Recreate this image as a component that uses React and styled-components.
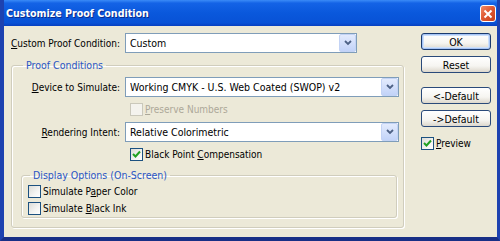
import React from "react";
import styled, { createGlobalStyle, css } from "styled-components";

const Global = createGlobalStyle`
  html, body { margin: 0; padding: 0; background: #ece9d8; }
  body { font-family: "DejaVu Sans Condensed", "DejaVu Sans", sans-serif; font-stretch: condensed; font-size: 10px; color: #000; }
  * { box-sizing: border-box; }
`;

const Window = styled.div`
  width: 500px;
  height: 241px;
  display: flex;
  flex-direction: column;
  background: #ece9d8;
  border-left: 4px solid #1d42b0;
  border-right: 3px solid #1d42b0;
  border-bottom: 4px solid #182f86;
  overflow: hidden;
`;

const TitleBar = styled.div`
  height: 26px;
  margin: 0 -3px 0 -4px;
  display: flex;
  align-items: center;
  justify-content: space-between;
  padding: 0 4px 0 6px;
  background: linear-gradient(#3b8bf7 0%, #1463e6 12%, #0a58dc 50%, #0852d6 88%, #0740c0 100%);
`;

const Title = styled.div`
  font-family: "DejaVu Sans Condensed", "DejaVu Sans", sans-serif;
  font-stretch: condensed;
  font-weight: bold;
  font-size: 10.6px;
  color: #fff;
  text-shadow: 1px 1px 0 #0a2a8a;
`;

const CloseButton = styled.div`
  width: 16px;
  height: 17px;
  margin-top: 1px;
  border: 1px solid #fff;
  border-radius: 3px;
  background: linear-gradient(135deg, #f08a68 0%, #e05a34 45%, #c8401c 100%);
  display: flex;
  align-items: center;
  justify-content: center;
`;

const Body = styled.div`
  flex: 1;
  display: flex;
  padding: 7px 0 0 7px;
  gap: 17px;
`;

const LeftColumn = styled.div`
  width: 393px;
  display: flex;
  flex-direction: column;
`;

const RightColumn = styled.div`
  width: 70px;
  display: flex;
  flex-direction: column;
`;

const TopRow = styled.div`
  display: grid;
  grid-template-columns: 114px 232px;
  height: 20px;
  align-items: center;
`;

const Label = styled.span`
  white-space: nowrap;
  text-align: ${(p) => (p.$right ? "right" : "left")};
  color: ${(p) => (p.$disabled ? "#aca899" : "#000")};
`;

const U = styled.span`
  text-decoration: underline;
  text-underline-offset: 1px;
`;

const SelectBox = styled.div`
  height: 20px;
  border: 1px solid #7f9db9;
  background: #fff;
  display: flex;
  align-items: center;
  padding-left: 4px;
  font-size: 10.5px;
`;

const SelectText = styled.span`
  flex: 1;
  white-space: nowrap;
  overflow: hidden;
`;

const ArrowButton = styled.div`
  width: 17px;
  height: 18px;
  border: 1px solid #c3d3f5;
  border-radius: 2px;
  background: linear-gradient(#e3ebfd, #c2d3f8);
  display: flex;
  align-items: center;
  justify-content: center;
`;

const Group = styled.fieldset`
  margin: ${(p) => p.$margin};
  padding: ${(p) => p.$padding};
  border: 1px solid #d0cdbd;
  border-radius: 3px;
  box-shadow: inset 1px 1px 0 #fff, 1px 1px 0 #fff;
  min-width: 0;
`;

const Legend = styled.legend`
  height: 13px;
  line-height: 13px;
  padding: 0 3px;
  margin-left: ${(p) => p.$offset}px;
  color: #2a55c4;
  font-size: 10.5px;
`;

const FormGrid = styled.div`
  display: grid;
  grid-template-columns: 102px 274px;
  grid-template-rows: 20px 25px 20px 24px;
  column-gap: 5px;
  align-items: center;
`;

const CheckRow = styled.div`
  display: flex;
  align-items: center;
  gap: 2px;
  height: ${(p) => p.$h || 17}px;
  grid-column: ${(p) => p.$col || "auto"};
  padding-left: ${(p) => p.$indent || 0}px;
`;

const Box = styled.span`
  width: 13px;
  height: 13px;
  flex: none;
  border: 1px solid ${(p) => (p.$disabled ? "#cac8bb" : "#1c5180")};
  background: ${(p) =>
    p.$disabled ? "#f4f3ee" : "linear-gradient(135deg, #dcdcd7 0%, #f4f4f2 60%, #fff 100%)"};
  display: flex;
  align-items: center;
  justify-content: center;
`;

const Button = styled.div`
  height: 17px;
  margin-top: ${(p) => p.$mt || 0}px;
  border: 1px solid #2a4a7a;
  border-radius: 3px;
  background: linear-gradient(#ffffff 0%, #f6f5f1 60%, #dcd7cc 100%);
  display: flex;
  align-items: center;
  justify-content: center;
  font-size: 10.5px;
  ${(p) =>
    p.$default &&
    css`
      box-shadow: inset 0 0 0 1px #a6c4f5, inset 0 0 0 2px #cde0fb;
      border-color: #1a3a6e;
    `}
`;

const PreviewRow = styled.div`
  display: flex;
  align-items: center;
  gap: 2px;
  margin-top: 10px;
  height: 13px;
`;

const Check = ({ checked, disabled }) => (
  <Box $disabled={disabled}>
    {checked && (
      <svg width="9" height="9" viewBox="0 0 9 9">
        <path d="M1 4 L3.5 6.5 L8 1.5" fill="none" stroke="#21a121" strokeWidth="2" />
      </svg>
    )}
  </Box>
);

const Select = ({ children }) => (
  <SelectBox>
    <SelectText>{children}</SelectText>
    <ArrowButton>
      <svg width="8" height="6" viewBox="0 0 8 6">
        <path d="M1 1 L4 4 L7 1" fill="none" stroke="#4d6185" strokeWidth="1.8" />
      </svg>
    </ArrowButton>
  </SelectBox>
);

export default function App() {
  return (
    <>
      <Global />
      <Window>
        <TitleBar>
          <Title>Customize Proof Condition</Title>
          <CloseButton>
            <svg width="10" height="10" viewBox="0 0 10 10">
              <path d="M1.5 1.5 L8.5 8.5 M8.5 1.5 L1.5 8.5" stroke="#fff" strokeWidth="2" />
            </svg>
          </CloseButton>
        </TitleBar>
        <Body>
          <LeftColumn>
            <TopRow>
              <Label>
                <U>C</U>ustom Proof Condition:
              </Label>
              <Select>Custom</Select>
            </TopRow>
            <Group $margin="6px 0 0 0" $padding="5px 4px 9px 6px">
              <Legend $offset={5}>Proof Conditions</Legend>
              <FormGrid>
                <Label $right>
                  <U>D</U>evice to Simulate:
                </Label>
                <Select>Working CMYK - U.S. Web Coated (SWOP) v2</Select>
                <CheckRow $col="2" $indent={5} $h={25}>
                  <Check disabled />
                  <Label $disabled>
                    <U>P</U>reserve Numbers
                  </Label>
                </CheckRow>
                <Label $right>
                  <U>R</U>endering Intent:
                </Label>
                <Select>Relative Colorimetric</Select>
                <CheckRow $col="2" $indent={5} $h={24}>
                  <Check checked />
                  <Label>
                    Black Point <U>C</U>ompensation
                  </Label>
                </CheckRow>
              </FormGrid>
              <Group $margin="3px 2px 0 3px" $padding="1px 6px 0 6px">
                <Legend $offset={2}>Display Options (On-Screen)</Legend>
                <CheckRow>
                  <Check />
                  <Label>
                    Simulate P<U>a</U>per Color
                  </Label>
                </CheckRow>
                <CheckRow>
                  <Check />
                  <Label>
                    Simulate <U>B</U>lack Ink
                  </Label>
                </CheckRow>
              </Group>
            </Group>
          </LeftColumn>
          <RightColumn>
            <Button $default>OK</Button>
            <Button $mt={6}>Reset</Button>
            <Button $mt={14}>&lt;-Default</Button>
            <Button $mt={6}>-&gt;Default</Button>
            <PreviewRow>
              <Check checked />
              <Label>
                <U>P</U>review
              </Label>
            </PreviewRow>
          </RightColumn>
        </Body>
      </Window>
    </>
  );
}
